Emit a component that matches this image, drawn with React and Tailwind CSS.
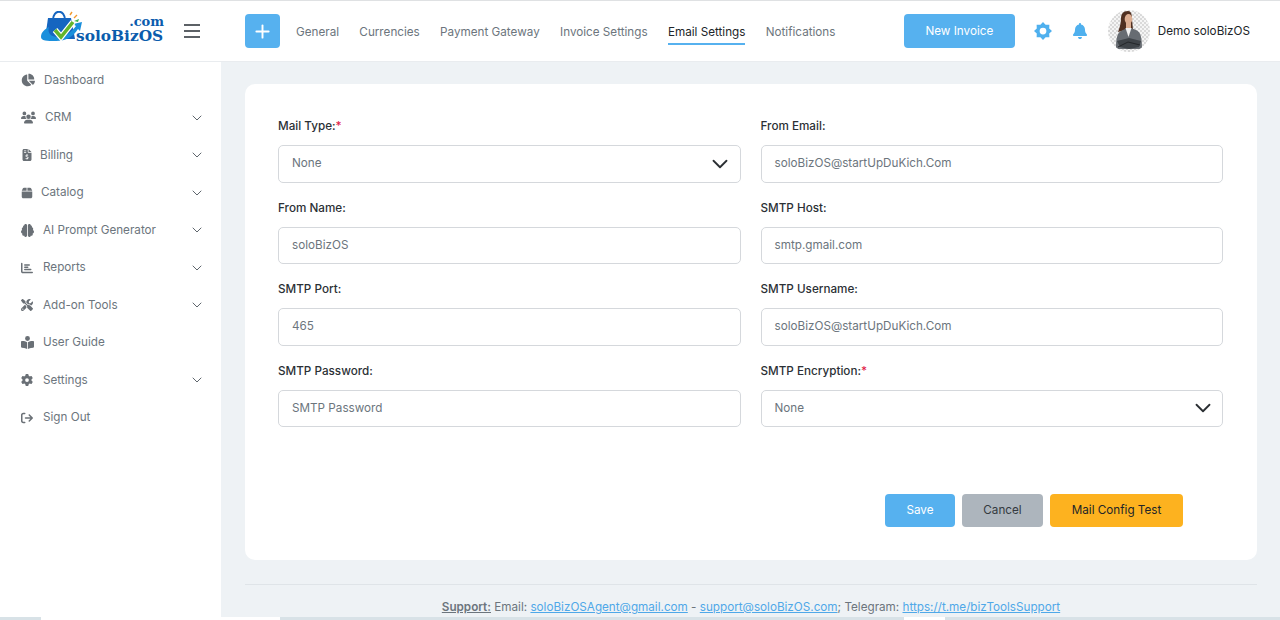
import React from 'react';
import {
  FaChartPie, FaUsers, FaFileInvoiceDollar, FaBox, FaBrain, FaChartBar,
  FaScrewdriverWrench, FaBookOpenReader, FaGear, FaArrowRightFromBracket, FaBell,
} from 'react-icons/fa6';
import { ChevronDown, Plus } from 'lucide-react';

const menu = [
  { label: 'Dashboard', icon: FaChartPie, box: 'w-[23px]', size: 14 },
  { label: 'CRM', icon: FaUsers, box: 'w-[24px]', size: 15, arrow: true },
  { label: 'Billing', icon: FaFileInvoiceDollar, box: 'w-[19px]', size: 12, arrow: true },
  { label: 'Catalog', icon: FaBox, box: 'w-[20px]', size: 12, arrow: true },
  { label: 'AI Prompt Generator', icon: FaBrain, box: 'w-[22px]', size: 13, arrow: true },
  { label: 'Reports', icon: FaChartBar, box: 'w-[22px]', size: 12, arrow: true },
  { label: 'Add-on Tools', icon: FaScrewdriverWrench, box: 'w-[22px]', size: 12, arrow: true },
  { label: 'User Guide', icon: FaBookOpenReader, box: 'w-[22px]', size: 13 },
  { label: 'Settings', icon: FaGear, box: 'w-[22px]', size: 12, arrow: true },
  { label: 'Sign Out', icon: FaArrowRightFromBracket, box: 'w-[22px]', size: 12 },
];

const tabs = ['General', 'Currencies', 'Payment Gateway', 'Invoice Settings', 'Email Settings', 'Notifications'];

function Logo() {
  return (
    <div className="relative h-[40px] w-[126px]">
      <svg viewBox="0 0 50 40" className="absolute left-0 top-0 h-[40px] w-[50px]">
        <path d="M8 7h23l4 21H5z" fill="#1565c0" />
        <path d="M13 9c0-11 12-11 12 0" fill="none" stroke="#1565c0" strokeWidth="2" />
        <path d="M1 26C1 21 5 18 9 16 7 22 11 26 18 26 26 26 32 20 36 15L33 13 42 11 40 20 38 18C33 26 26 30 16 30 7 30 1 30 1 26z" fill="#1a8fdc" />
        <path d="M15 19l6 7L33 11" fill="none" stroke="#ffffff" strokeWidth="6" />
        <path d="M15 19l6 7L33 11" fill="none" stroke="#63b52c" strokeWidth="3.6" />
        <path d="M30 4l2-3M34 7l3-3" stroke="#f29a2e" strokeWidth="1.4" />
        <path d="M34 10l5-2-1 3z" fill="#3bb54a" />
      </svg>
      <span className="absolute right-[2px] top-[4px] font-['DejaVu_Serif',serif] text-[13px] font-bold leading-[13px] text-[#0b5cad]">.com</span>
      <span className="absolute left-[36px] top-[17px] font-['DejaVu_Serif',serif] text-[15.4px] font-bold leading-[16px] text-[#0b5cad]">soloBizOS</span>
    </div>
  );
}

function Gear() {
  return (
    <svg viewBox="0 0 24 24" className="h-[18px] w-[18px]">
      <path
        fill="#4fb0ee"
        fillRule="evenodd"
        d="M12 0l3.44 3.69 5.05-.18-.18 5.05L24 12l-3.69 3.44.18 5.05-5.05-.18L12 24l-3.44-3.69-5.05.18.18-5.05L0 12l3.69-3.44-.18-5.05 5.05.18zM12 7.5a4.5 4.5 0 100 9 4.5 4.5 0 000-9z"
      />
    </svg>
  );
}

function Avatar() {
  return (
    <div className="h-[42px] w-[42px] overflow-hidden rounded-full">
      <svg viewBox="0 0 42 42" className="h-full w-full">
        <defs>
          <pattern id="checker" width="4" height="4" patternUnits="userSpaceOnUse">
            <rect width="4" height="4" fill="#f5f5f5" />
            <rect width="2" height="2" fill="#d9d9d9" />
            <rect x="2" y="2" width="2" height="2" fill="#d9d9d9" />
          </pattern>
        </defs>
        <rect width="42" height="42" fill="url(#checker)" />
        <path d="M20 1c-5 0-7 3-7 8 0 5-2 10-3 13l8-2h7l-1-11c0-5-1-8-4-8z" fill="#4f2f20" />
        <ellipse cx="20.5" cy="9" rx="3.8" ry="5" fill="#dcae92" />
        <path d="M18 13h5v6h-5z" fill="#dcae92" />
        <path d="M8 39c0-11 1-17 7-19l4-2 4 0 5 2c5 2 6 8 6 19z" fill="#676c72" />
        <path d="M17.5 18l3 9 3-9z" fill="#f2f2f2" />
        <path d="M9 31l12-3 12 3-2 6-10 2-9-2z" fill="#3f4449" />
        <path d="M10 37l10-5 12 3" fill="none" stroke="#24272a" strokeWidth="1" />
      </svg>
    </div>
  );
}

function Field({ label, required, value, placeholder, select }) {
  return (
    <div className="h-[81.5px]">
      <label className="block h-[28px] text-[11.7px] font-medium leading-[18px] text-[#2b3035]">
        {label}
        {required && <span className="text-[#e11d48]">*</span>}
      </label>
      <div className="flex h-[37.5px] items-center justify-between rounded-[5px] border border-[#d5d8dc] bg-white px-[13px] text-[11.7px] text-[#6c757d]">
        <span className="pt-[1px]">{value || placeholder}</span>
        {select && <ChevronDown size={26} strokeWidth={1.7} className="-mr-[6.5px] text-[#2b2f33]" />}
      </div>
    </div>
  );
}

export default function App() {
  return (
    <div className="flex h-[620px] w-[1280px] flex-col overflow-hidden bg-white font-['Inter',sans-serif] text-[11.7px]">
      <div className="h-[1px] bg-[#dfe1e3]" />
      <header className="flex h-[61px] shrink-0 items-center border-b border-[#e9ecef] bg-white">
        <div className="ml-[40px] flex w-[205px] items-center">
          <Logo />
          <div className="ml-[18px] flex w-[16px] flex-col gap-[3.5px]">
            <span className="h-[2.5px] bg-[#5c6166]" />
            <span className="h-[2.5px] bg-[#5c6166]" />
            <span className="h-[2.5px] bg-[#5c6166]" />
          </div>
        </div>
        <button className="flex h-[34px] w-[35px] items-center justify-center rounded-[4px] bg-[#56b1ef] text-white">
          <Plus size={21} strokeWidth={2.2} />
        </button>
        <nav className="ml-[16px] mt-[3px] flex gap-[20.3px]">
          {tabs.map((t) => (
            <a
              key={t}
              className={
                t === 'Email Settings'
                  ? 'border-b-2 border-[#56b1ef] pb-[2px] pt-[4px] text-[#212529]'
                  : 'border-b-2 border-transparent pb-[2px] pt-[4px] text-[#6c757d]'
              }
            >
              {t}
            </a>
          ))}
        </nav>
        <button className="ml-auto flex h-[34px] w-[111px] items-center justify-center rounded-[4px] bg-[#56b1ef] pt-[1px] text-white">
          New Invoice
        </button>
        <div className="ml-[19px] flex w-[18px] justify-center">
          <Gear />
        </div>
        <FaBell size={16} className="ml-[20px] text-[#4fb0ee]" />
        <div className="ml-[20px]">
          <Avatar />
        </div>
        <span className="ml-[8px] mr-[30px] pt-[1px] text-[#212529]">Demo soloBizOS</span>
      </header>

      <div className="flex min-h-0 flex-1">
        <aside className="w-[221px] shrink-0 bg-white">
          <ul className="-mt-[0.3px] pl-[21px] pr-[18px]">
            {menu.map((m) => {
              const Icon = m.icon;
              return (
                <li key={m.label} className="flex h-[37.5px] items-center text-[#6c757d]">
                  <span className={`${m.box} flex shrink-0 items-center text-[#6a7076]`}>
                    <Icon size={m.size} />
                  </span>
                  <span>{m.label}</span>
                  {m.arrow && <ChevronDown size={16} strokeWidth={1.5} className="-mr-[2px] ml-auto text-[#5f666d]" />}
                </li>
              );
            })}
          </ul>
        </aside>

        <main className="flex min-w-0 flex-1 flex-col bg-[#eef2f5] pl-[24px] pr-[23px] pt-[22px]">
          <section className="h-[476px] shrink-0 rounded-[10px] bg-white pl-[33px] pr-[34px] pt-[33px]">
            <div className="grid grid-cols-2 gap-x-[20px]">
              <Field label="Mail Type:" required value="None" select />
              <Field label="From Email:" value="soloBizOS@startUpDuKich.Com" />
              <Field label="From Name:" value="soloBizOS" />
              <Field label="SMTP Host:" value="smtp.gmail.com" />
              <Field label="SMTP Port:" value="465" />
              <Field label="SMTP Username:" value="soloBizOS@startUpDuKich.Com" />
              <Field label="SMTP Password:" placeholder="SMTP Password" />
              <Field label="SMTP Encryption:" required value="None" select />
            </div>
            <div className="mr-[40px] mt-[51px] flex justify-end gap-[7px]">
              <button className="h-[33px] w-[70px] rounded-[4px] bg-[#56b1ef] pt-[1px] text-white">Save</button>
              <button className="h-[33px] w-[81px] rounded-[4px] bg-[#adb5bd] pt-[1px] text-[#343a40]">Cancel</button>
              <button className="h-[33px] w-[133px] rounded-[4px] bg-[#fdb21f] pt-[1px] text-[#212529]">Mail Config Test</button>
            </div>
          </section>
          <footer className="mt-[24px] border-t border-[#dfe4e8] pt-[14px] text-center text-[#6c757d]">
            <span className="font-semibold underline">Support:</span> Email:{' '}
            <a className="text-[#4fa8e8] underline">soloBizOSAgent@gmail.com</a> -{' '}
            <a className="text-[#4fa8e8] underline">support@soloBizOS.com</a>; Telegram:{' '}
            <a className="text-[#4fa8e8] underline">https://t.me/bizToolsSupport</a>
          </footer>
        </main>
      </div>

      <div className="flex h-[3px] shrink-0 bg-[#d8e2e7]">
        <div className="ml-[41px] w-[239px] bg-white" />
        <div className="ml-[624px] w-[41px] bg-white" />
      </div>
    </div>
  );
}
